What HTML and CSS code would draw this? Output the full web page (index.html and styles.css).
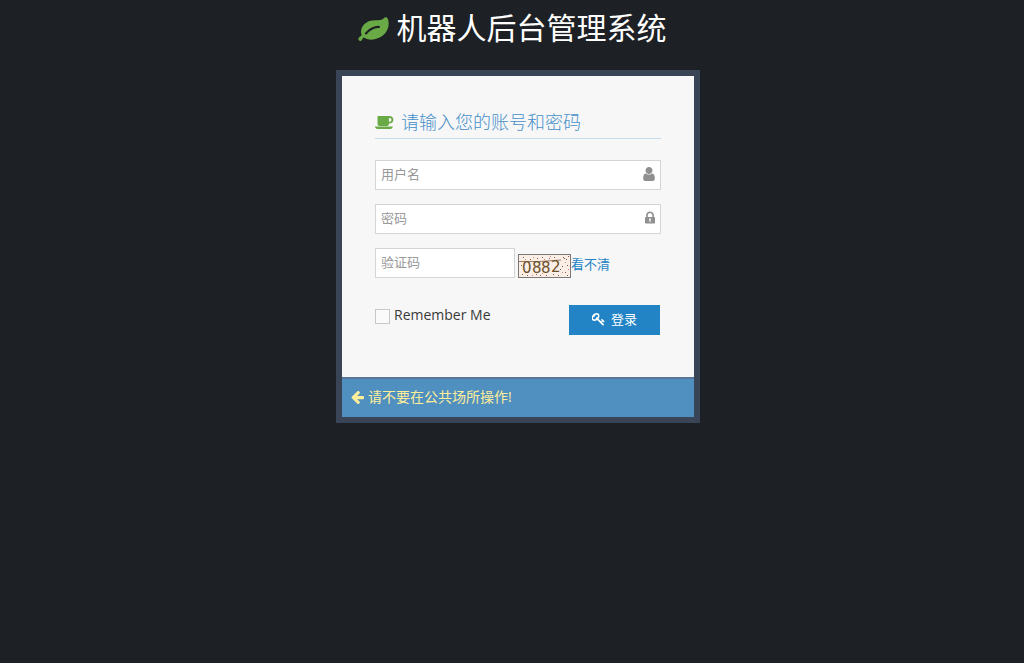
FILE: index.html
```html
<!DOCTYPE html>
<html lang="zh-CN">
<head>
<meta charset="utf-8">
<title>机器人后台管理系统</title>
<link rel="stylesheet" href="styles.css">
</head>
<body>
<main class="login">
  <h1 class="brand">
    <svg class="brand-icon" viewBox="0 128 1792 1536" aria-hidden="true"><path d="M1280 832q0-26-19-45t-45-19q-172 0-318 49.500t-259.500 134-235.500 219.500q-19 21-19 45 0 26 19 45t45 19q24 0 45-19 27-24 74-71t67-66q137-124 268.500-176t313.500-52q26 0 45-19t19-45zm512-198q0 95-20 193-46 224-184.500 383t-357.500 268q-214 108-438 108-148 0-286-47-15-5-88-42t-96-37q-16 0-39.500 32t-45 70-52.500 70-60 32q-43 0-63.500-17.500t-45.500-59.500q-2-4-6-11t-5.500-10-3-9.500-1.500-13.500q0-35 31-73.500t68-65.500 68-56 31-48q0-4-14-38t-16-44q-9-51-9-104 0-115 43.500-220t119-184.500 170.500-139 204-95.500q55-18 145-25.500t179.500-9 178.500-6 163.500-24 113.500-56.500l29.500-29.500 29.500-28 27-20 36.500-16 43.500-4.500q39 0 70.500 46t47.500 112 24 124 8 96z"/></svg>
    <span>机器人后台管理系统</span>
  </h1>
  <section class="card">
    <form class="card-body">
      <h2 class="heading">
        <svg class="heading-icon" viewBox="0 256 1920 1408" aria-hidden="true"><path d="M1664 736q0-80-56-136t-136-56h-64v384h64q80 0 136-56t56-136zm-1664 672h1792q0 106-75 181t-181 75h-1280q-106 0-181-75t-75-181zm1856-672q0 159-112.500 271.500t-271.500 112.500h-64v32q0 92-66 158t-158 66h-704q-92 0-158-66t-66-158v-736q0-26 19-45t45-19h1152q159 0 271.500 112.500t112.500 271.500z"/></svg>
        <span>请输入您的账号和密码</span>
      </h2>
      <div class="field">
        <input class="input" type="text" placeholder="用户名" aria-label="用户名">
        <svg class="field-icon" viewBox="256 128 1280 1536" aria-hidden="true"><path d="M1536 1399q0 109-62.500 187t-150.500 78h-854q-88 0-150.500-78t-62.500-187q0-85 8.500-160.500t31.500-152 58.500-131 94-89 134.500-34.500q131 128 313 128t313-128q76 0 134.500 34.500t94 89 58.500 131 31.500 152 8.500 160.500zm-256-887q0 159-112.500 271.500t-271.500 112.500-271.500-112.500-112.500-271.500 112.500-271.500 271.500-112.500 271.500 112.500 112.500 271.500z"/></svg>
      </div>
      <div class="field">
        <input class="input" type="password" placeholder="密码" aria-label="密码">
        <svg class="field-icon field-icon-lock" viewBox="320 128 1152 1408" aria-hidden="true"><path d="M640 768h512v-192q0-106-75-181t-181-75-181 75-75 181v192zm832 96v576q0 40-28 68t-68 28h-960q-40 0-68-28t-28-68v-576q0-40 28-68t68-28h32v-192q0-184 132-316t316-132 316 132 132 316v192h32q40 0 68 28t28 68z"/><path class="keyhole" d="M896 920a110 110 0 0 1 64 200v240h-128v-240a110 110 0 0 1 64-200z"/></svg>
      </div>
      <div class="captcha-row">
        <input class="input captcha-input" type="text" placeholder="验证码" aria-label="验证码">
        <svg class="captcha" viewBox="0 0 53 24" role="img" aria-label="0882">
          <rect class="captcha-frame" x="0.500" y="0.500" width="52" height="23"/>
          <path class="captcha-line" d="M1 7.500H22L43 6"/>
          <path class="captcha-dots" d="M5 3.500h1M12 5.500h1M19 4.500h1M24 3.500h1M31 4.500h1M36 3.500h1M45 3.500h1M48 5.500h1M46 4.500h1M50 2.500h1M3 11.500h1M4 20.500h1M9 21.500h1M18 20.500h1M22 21.500h1M28 21.500h1M35 20.500h1M42 15.500h1M47 18.500h1M49 11.500h1M44 12.500h1M40 21.500h1M49 21.500h1"/>
          <path class="captcha-specks" d="M7 5.500h1M15 3.500h1M26 5.500h1M32 2.500h1M47 8.500h1M44 18.500h1M24 19.500h1M14 21.500h1M50 15.500h1"/>
          <text class="captcha-text" y="19"><tspan x="4">0</tspan><tspan x="14">8</tspan><tspan x="23">8</tspan><tspan x="33" y="18">2</tspan></text>
        </svg>
        <a class="refresh" href="#">看不清</a>
      </div>
      <div class="actions">
        <label class="remember"><input class="checkbox" type="checkbox"><span>Remember Me</span></label>
        <button class="submit" type="submit">
          <svg class="submit-icon" viewBox="64 128 1664 1664" aria-hidden="true"><path d="M832 512q0-80-56-136t-136-56-136 56-56 136q0 42 19 83-41-19-83-19-80 0-136 56t-56 136 56 136 136 56 136-56 56-136q0-42-19-83 41 19 83 19 80 0 136-56t56-136zm851 704q0 17-49 66t-66 49q-9 0-28.500-16t-36.500-33-38.500-40-24.500-26l-96 96 220 220q28 28 28 68 0 42-39 81t-81 39q-40 0-68-28l-671-671q-176 131-365 131-163 0-265.500-102.500t-102.500-265.500q0-160 95-313t248-248 313-95q163 0 265.500 102.500t102.500 265.500q0 189-131 365l355 355 96-96q-3-3-26-24.500t-40-38.500-33-36.500-16-28.500q0-17 49-66t66-49q13 0 23 10 6 6 46 44.500t82 79.500 86.500 86 73 78 28.500 41z"/></svg>
          <span>登录</span>
        </button>
      </div>
    </form>
    <footer class="card-footer">
      <a class="notice" href="#">
        <svg class="notice-icon" viewBox="128 192 1536 1536" aria-hidden="true"><path d="M1664 896v128q0 53-32.500 90.500t-84.500 37.500h-704l293 294q38 36 38 90t-38 90l-75 76q-37 37-90 37-52 0-91-37l-651-652q-37-37-37-90 0-52 37-91l651-650q38-38 91-38 52 0 90 38l75 74q38 38 38 91t-38 91l-293 293h704q52 0 84.500 37.500t32.500 90.500z"/></svg>
        <span>请不要在公共场所操作!</span>
      </a>
    </footer>
  </section>
</main>
</body>
</html>
```
FILE: styles.css
```css
* { box-sizing: border-box; }

body {
  margin: 0;
  min-height: 100vh;
  background: #1d2024;
  color: #393939;
  font: 13px/20px "Open Sans", "Noto Sans CJK SC", sans-serif;
}

svg { flex: none; fill: currentColor; }

.login {
  max-width: 376px;
  margin: 0 auto;
  padding-top: 8px;
}

.brand {
  display: flex;
  justify-content: center;
  align-items: center;
  gap: 8px;
  margin: 0 0 22px;
  color: #fff;
  font-size: 30px;
  font-weight: 400;
  line-height: 40px;
  white-space: nowrap;
}

.brand-icon { width: 31px; height: 26px; color: #69aa46; }

.card {
  margin-left: 12px;
  border: 6px solid #394557;
  background: #f7f7f7;
}

.card-body { padding: 34px 33px 42px; }

.heading {
  display: flex;
  align-items: center;
  gap: 7px;
  margin: 0 0 21px;
  padding-bottom: 4px;
  border-bottom: 1px solid #c5dcea;
  color: #478fca;
  font-size: 18px;
  font-weight: 300;
  line-height: 24px;
}

.heading-icon { width: 19px; height: 14px; color: #69aa46; }

.field { position: relative; margin-bottom: 14px; }

.input {
  display: block;
  width: 100%;
  height: 30px;
  padding: 0 24px 2px 5px;
  border: 1px solid #d5d5d5;
  border-radius: 0;
  background: #fff;
  color: #555;
  font: inherit;
}

.input::placeholder { color: #999; opacity: 1; }

.field-icon {
  position: absolute;
  top: 7px;
  right: 6px;
  width: 12px;
  height: 14px;
  color: #909090;
}

.field-icon-lock { width: 10px; height: 13px; }
.keyhole { fill: #fff; }

.captcha-row { display: flex; align-items: center; }

.captcha-input { width: 140px; padding-right: 5px; }

.captcha { width: 53px; height: 24px; margin: 6px 0 0 3px; }
.captcha-frame { fill: #fbeee6; stroke: #7d7676; }
.captcha-line { fill: none; stroke: #9c7862; }
.captcha-dots { stroke: #79604d; }
.captcha-specks { stroke: #d78a80; }
.captcha-text { fill: #6b522c; font: 15px "DejaVu Sans", sans-serif; }

.refresh { margin-top: 2px; color: #2283c5; text-decoration: none; }

.actions {
  display: flex;
  justify-content: space-between;
  align-items: flex-start;
  padding: 27px 1px 0 0;
}

.remember {
  display: flex;
  align-items: center;
  gap: 4px;
  font-size: 14px;
}

.checkbox {
  appearance: none;
  width: 15px;
  height: 15px;
  margin: 3px 0 0;
  border: 1px solid #c8c8c8;
  background: #fafafa;
}

.checkbox:checked { background: #2283c5; }

.submit {
  display: flex;
  justify-content: center;
  align-items: center;
  gap: 6px;
  width: 91px;
  height: 30px;
  padding: 0 0 2px;
  border: 0;
  background: #2283c5;
  color: #fff;
  font: inherit;
}

.submit-icon { width: 13px; height: 13px; }

.card-footer {
  padding: 8px 9px 10px;
  border-top: 2px solid #597597;
  background: #5090c1;
}

.notice {
  display: flex;
  align-items: center;
  gap: 4px;
  color: #fe9;
  font-size: 14px;
  text-decoration: none;
}

.notice-icon { width: 13px; height: 13px; }
```
